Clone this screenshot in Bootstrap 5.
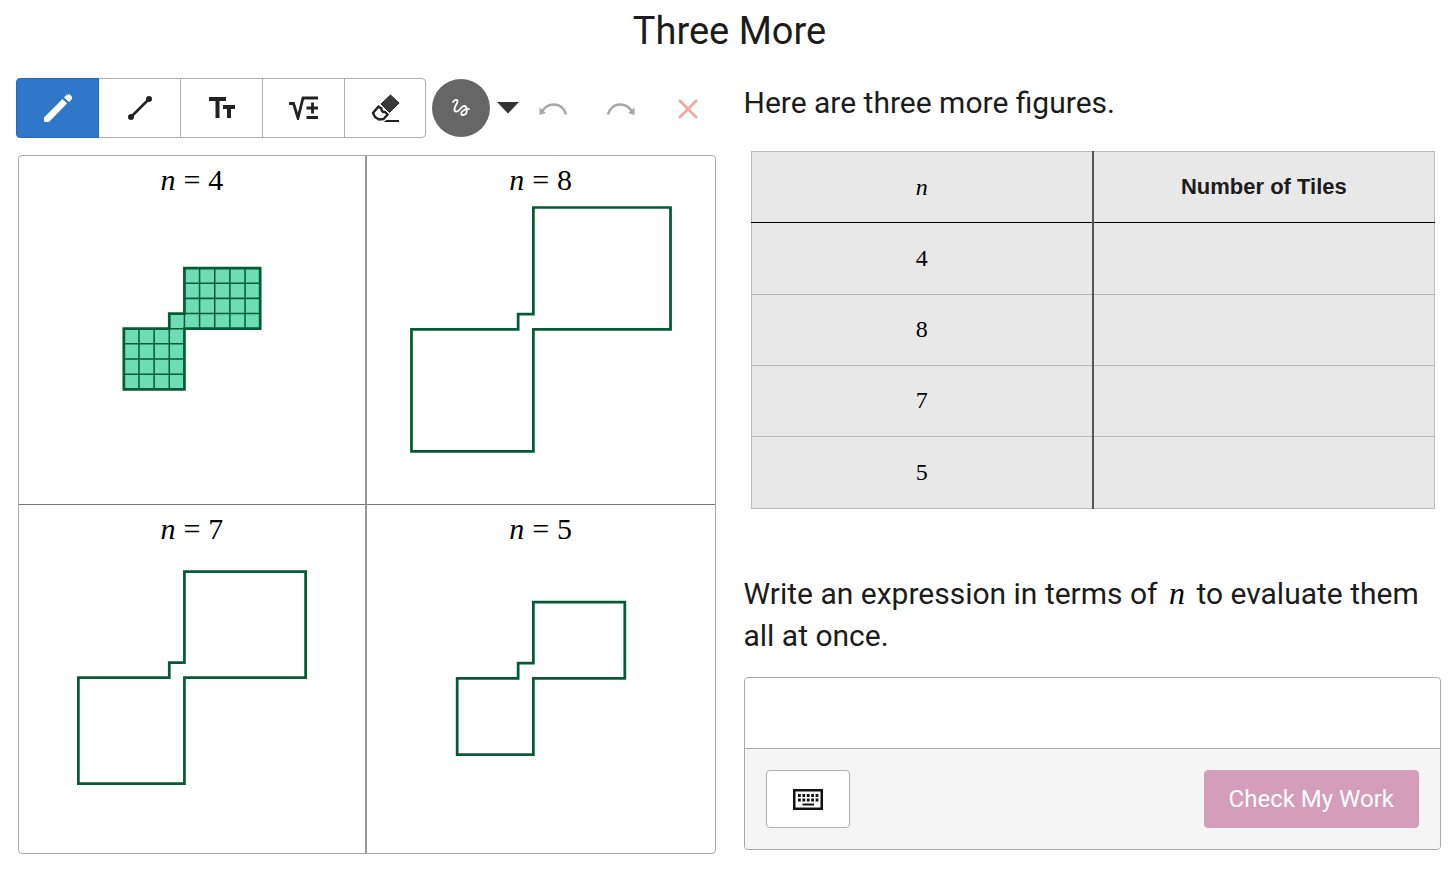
<!DOCTYPE html>
<html lang="en">
<head>
<meta charset="utf-8">
<meta name="viewport" content="width=device-width, initial-scale=1">
<title>Three More</title>
<link href="https://cdn.jsdelivr.net/npm/bootstrap@5.3.0/dist/css/bootstrap.min.css" rel="stylesheet">
<style>
  body { font-family: Roboto, "Liberation Sans", sans-serif; color: #1c1c1c; background: #fff; }
  .page { padding: 8px 15px 16px 18px; }
  .page-title { font-size: 38px; line-height: 46px; margin-bottom: 24px; font-weight: 400; }
  .columns { --bs-gutter-x: 28px; }
  .math { font-family: "Liberation Serif", serif; color: #000; }
  .math i { font-style: italic; }

  .toolbar { margin-left: -2px; }
  .tools .btn { width: 83px; height: 60px; border: 1px solid #b0b0b0; color: #222; background: #fff; border-radius: 4px; }
  .tools .btn:last-child { width: 82px; }
  .tools .btn.active { background: #2f78c9; border-color: #1f6bc4; color: #fff; }
  .color-dot { width: 58px; height: 58px; margin-left: 6px; background: #666; color: #fff; }
  .tool-caret { width: 22px; margin-left: 7px; }
  .history { gap: 38px; margin-left: 20px; }
  .history .btn { width: 29px; height: 58px; padding: 2px 0 0; }

  .sketch { margin-top: 17px; border: 1px solid #a9a9a9; border-radius: 4px; }
  .sketch .cell { border: 0 solid #777; }
  .sketch .cell:nth-child(odd) { border-right: 2px solid #999; }
  .sketch .cell:nth-child(-n+2) { border-bottom-width: 1px; }
  .cell-title { height: 48px; font-size: 30px; line-height: 48px; gap: 8px; }
  .outline { fill: none; stroke: #045c34; stroke-width: .18; }
  .tile-lines { stroke-width: .1; }
  .tiles { fill: #6edcb4; }

  .prompt { font-size: 30px; line-height: 42px; }
  .prompt-top { margin: 4px 0 27px; }
  .prompt-bottom { margin: 63px 0 20px; }
  .prompt .math { font-size: 32px; padding: 0 4px; }

  .values-wrap { padding: 0 6px 0 7px; }
  .values { background: #e8e8e8; border: 1px solid #b8bcba; table-layout: fixed; }
  .values th, .values td { height: 71px; padding: 0; text-align: center; vertical-align: middle; font-size: 24px; line-height: 32px; font-weight: 400; border-bottom: 1px solid #b9b9b9; }
  .values tbody th { padding-bottom: 2px; }
  .values tbody tr:first-child > *, .values tbody tr:last-child > * { height: 72px; }
  .values thead th { border-bottom-color: #000; }
  .values tr > :first-child { border-right: 2px solid #555; }
  .values .col-name { font-family: "Liberation Sans", Arial, sans-serif; font-size: 22px; font-weight: 700; }
  .values tbody tr:last-child > * { border-bottom: 0; }

  .answer { border: 1px solid #a9a9a9; border-radius: 4px; }
  .answer .form-control { height: 70px; border: 0; border-radius: 4px 4px 0 0; font-size: 28px; }
  .answer-bar { background: #f5f5f5; border-top: 1px solid #a9a9a9; padding: 21px; border-radius: 0 0 4px 4px; }
  .answer-bar .btn { height: 58px; border-radius: 4px; }
  .btn-keys { width: 84px; background: #fff; border: 1px solid #b0b0b0; color: #111; }
  .btn-check-work { background: #d49dba; border-color: #d49dba; color: #fff; font-size: 24px; padding: 0 24px; }
</style>
</head>
<body>
<main class="container-fluid page">
  <h1 class="page-title text-center">Three More</h1>
  <div class="row columns">
    <section class="col-6">
      <div class="d-flex align-items-center toolbar">
        <div class="btn-group tools" role="group" aria-label="Sketch tools">
          <button type="button" class="btn active d-flex align-items-center justify-content-center p-0" aria-label="Pencil">
            <svg width="30" height="30" viewBox="0 0 30 30" fill="currentColor"><path d="M1 24.500 19.500 6 24 10.500 6 29H2.500Q1 29 1 27.500zM21 4.500 23.500 2Q25.500.500 27.500 2T29 6L26 9z"/></svg>
          </button>
          <button type="button" class="btn d-flex align-items-center justify-content-center p-0" aria-label="Line">
            <svg width="26" height="26" viewBox="0 0 26 26" fill="currentColor"><path d="M4 22 22 4" stroke="currentColor" stroke-width="2.500"/><circle cx="4" cy="22" r="3"/><circle cx="22" cy="4" r="3"/></svg>
          </button>
          <button type="button" class="btn d-flex align-items-center justify-content-center p-0" aria-label="Text">
            <svg width="28" height="22" viewBox="0 0 28 22" fill="none" stroke="currentColor" stroke-width="4"><path d="M1 2H18M9.500 2V21M15 10H27M21 10V21"/></svg>
          </button>
          <button type="button" class="btn d-flex align-items-center justify-content-center p-0" aria-label="Math">
            <svg width="30" height="24" viewBox="0 0 30 24" fill="none" stroke="currentColor" stroke-width="2.800"><path d="M0 7.500H4.500L9 22 14 2H29M17.500 12H29M23.500 6.500V17.500M17.500 21.500H29"/></svg>
          </button>
          <button type="button" class="btn d-flex align-items-center justify-content-center p-0" aria-label="Eraser">
            <svg width="29" height="29" viewBox="0 0 29 29"><path d="M19.500 1 28 9 18.500 18.500 10 10z" fill="#3a3a3a" stroke="#222"/><path d="M7.500 12.500 2 19 4 23 8 25.500 12.500 25 16.500 20.500 14 18 12 18 10.500 16 10.500 14.500z" fill="none" stroke="#222" stroke-width="2.400"/><path d="M12.500 28 15.500 26H28V28z" fill="#222"/></svg>
          </button>
        </div>
        <button type="button" class="btn color-dot rounded-circle p-0 flex-shrink-0 d-flex align-items-center justify-content-center" aria-label="Pen colour">
          <svg width="20" height="20" viewBox="0 0 20 20" fill="none" stroke="currentColor" stroke-width="1.800" stroke-linecap="round"><path d="M2 4C4 .500 8 1.500 6 5 4 9 2 12 4.500 13.500 8 15 10 8 13 8 16 8 16 11 12.500 12.500 10 14 9 17 12 17 16 17 16 13 15.500 11.500Q15 10 18 11"/></svg>
        </button>
        <button type="button" class="btn border-0 p-0 tool-caret flex-shrink-0 d-flex" aria-label="More pens">
          <svg width="22" height="12" viewBox="0 0 22 12"><path d="M0 0H22L11 11.500z" fill="#333"/></svg>
        </button>
        <div class="d-flex history">
          <button type="button" class="btn border-0 d-flex align-items-center" aria-label="Undo">
            <svg width="29" height="14" viewBox="0 0 29 14" fill="none" stroke="#a8a8a8" stroke-width="2.500"><path d="M3 10C8 0 23-1 27 12.500"/><path d="M.500 5.500V13L7 11z" fill="#a8a8a8" stroke="none"/></svg>
          </button>
          <button type="button" class="btn border-0 d-flex align-items-center" aria-label="Redo">
            <svg width="29" height="14" viewBox="0 0 29 14" fill="none" stroke="#a8a8a8" stroke-width="2.500"><path d="M26 10C21 0 6-1 2 12.500"/><path d="M28.500 5.500V13L22 11z" fill="#a8a8a8" stroke="none"/></svg>
          </button>
          <button type="button" class="btn border-0 d-flex align-items-center justify-content-center" aria-label="Clear">
            <svg width="20" height="20" viewBox="0 0 20 20" fill="none" stroke="#f3a699" stroke-width="2.500"><path d="M1 1 19 19M19 1 1 19"/></svg>
          </button>
        </div>
      </div>

      <div class="row g-0 sketch">
        <div class="col-6 cell">
          <div class="cell-title math d-flex justify-content-center"><i>n</i><span>=</span><span>4</span></div>
          <svg class="d-block w-100" viewBox="0 48 348 300" role="img" aria-label="Tiles for n = 4">
            <g transform="translate(166.500 173.500) scale(15.250)">
              <path class="outline tiles" d="M0 0h5v-4h-5v3h-1v1h-3v4h4z"/>
              <path class="outline tile-lines" d="M0-1h5M0-2h5M0-3h5M1 0v-4M2 0v-4M3 0v-4M4 0v-4M0 0v-1M-1 0h1M-4 1h4M-4 2h4M-4 3h4M-3 0v4M-2 0v4M-1 0v4"/>
            </g>
          </svg>
        </div>
        <div class="col-6 cell">
          <div class="cell-title math d-flex justify-content-center"><i>n</i><span>=</span><span>8</span></div>
          <svg class="d-block w-100" viewBox="0 48 348 300" role="img" aria-label="Outline for n = 8">
            <path class="outline" transform="translate(166.500 173.500) scale(15.250)" d="M0 0h9v-8h-9v7h-1v1h-7v8h8z"/>
          </svg>
        </div>
        <div class="col-6 cell">
          <div class="cell-title math d-flex justify-content-center"><i>n</i><span>=</span><span>7</span></div>
          <svg class="d-block w-100" viewBox="0 48 348 300" role="img" aria-label="Outline for n = 7">
            <path class="outline" transform="translate(166.500 173.500) scale(15.250)" d="M0 0h8v-7h-8v6h-1v1h-6v7h7z"/>
          </svg>
        </div>
        <div class="col-6 cell">
          <div class="cell-title math d-flex justify-content-center"><i>n</i><span>=</span><span>5</span></div>
          <svg class="d-block w-100" viewBox="0 48 348 300" role="img" aria-label="Outline for n = 5">
            <path class="outline" transform="translate(166.500 173.500) scale(15.250)" d="M0 0h6v-5h-6v4h-1v1h-4v5h5z"/>
          </svg>
        </div>
      </div>
    </section>

    <section class="col-6">
      <p class="prompt prompt-top">Here are three more figures.</p>
      <div class="values-wrap">
        <table class="values w-100">
          <thead>
            <tr><th scope="col" class="math"><i>n</i></th><th scope="col" class="col-name">Number of Tiles</th></tr>
          </thead>
          <tbody>
            <tr><th scope="row" class="math">4</th><td></td></tr>
            <tr><th scope="row" class="math">8</th><td></td></tr>
            <tr><th scope="row" class="math">7</th><td></td></tr>
            <tr><th scope="row" class="math">5</th><td></td></tr>
          </tbody>
        </table>
      </div>
      <label class="prompt prompt-bottom d-block" for="expression">Write an expression in terms of <i class="math">n</i> to evaluate them all at once.</label>
      <div class="answer">
        <input type="text" class="form-control" id="expression" autocomplete="off">
        <div class="answer-bar d-flex justify-content-between">
          <button type="button" class="btn btn-keys p-0 d-flex align-items-center justify-content-center" aria-label="Keyboard">
            <svg width="30" height="21" viewBox="0 0 30 21" fill="none" stroke="currentColor"><rect x="1.250" y="1.250" width="27.500" height="18.500" stroke-width="2.500"/><path d="M5 6.500H26M5 11H26" stroke-width="2.800" stroke-dasharray="2.800 1.600"/><path d="M9.500 15.500H21" stroke-width="2"/></svg>
          </button>
          <button type="button" class="btn btn-check-work">Check My Work</button>
        </div>
      </div>
    </section>
  </div>
</main>
<script src="https://cdn.jsdelivr.net/npm/bootstrap@5.3.0/dist/js/bootstrap.bundle.min.js"></script>
</body>
</html>
